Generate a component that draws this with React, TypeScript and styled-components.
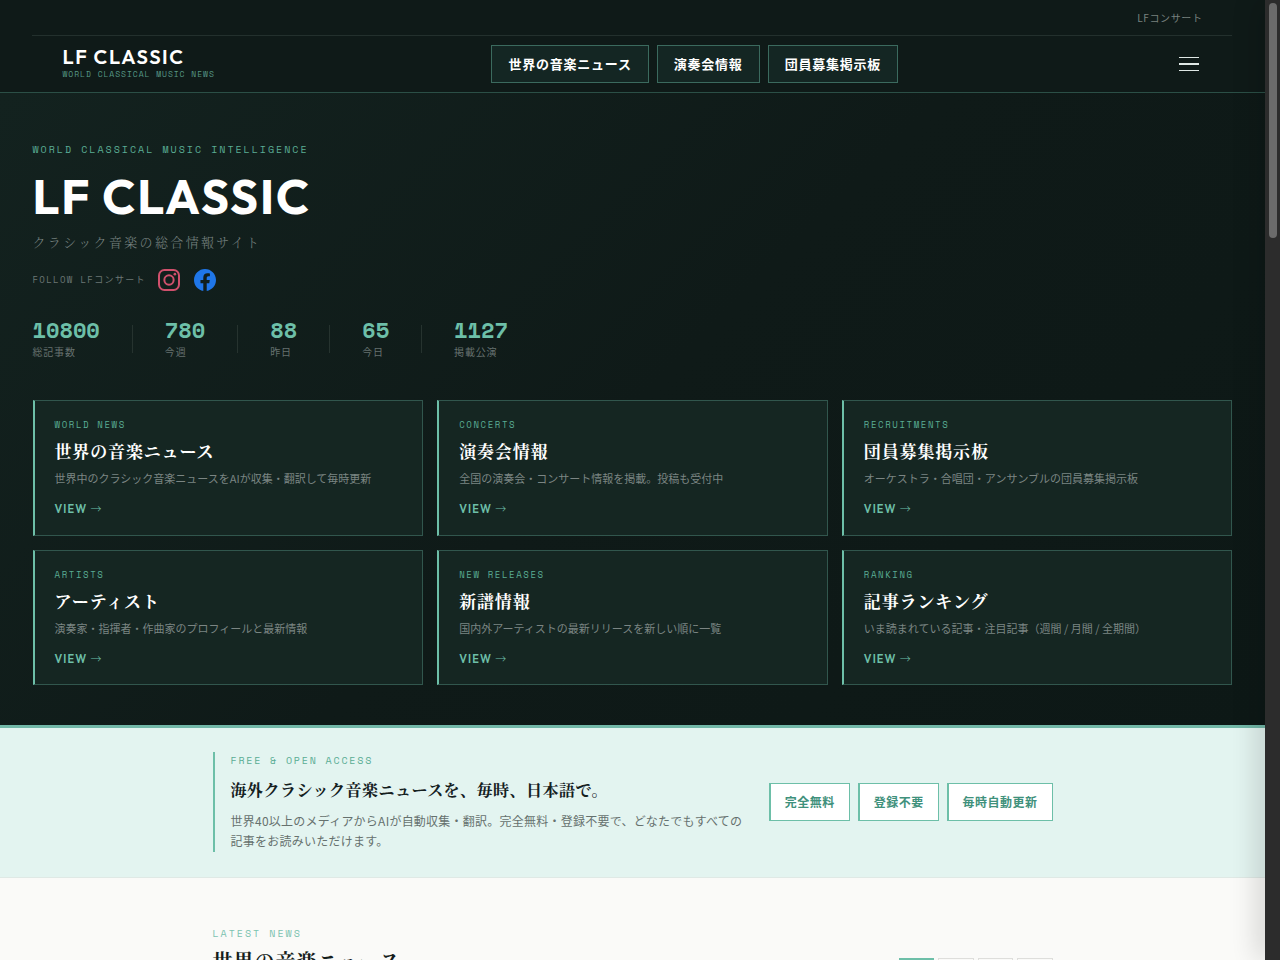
import React from "react";
import styled, { createGlobalStyle } from "styled-components";

const sans = `"Noto Sans CJK JP", "Noto Sans", sans-serif`;
const serif = `"Noto Serif CJK JP", "Noto Serif JP", "Noto Sans CJK JP", serif`;
const mono = `"Space Mono", "Liberation Mono", "Noto Sans CJK JP", monospace`;
const display = `"Outfit", "Lato", "Noto Sans CJK JP", sans-serif`;

const mint = "#6dbfa8";

const GlobalStyle = createGlobalStyle`
  *, *::before, *::after { box-sizing: border-box; }
  html, body { margin: 0; padding: 0; overflow: hidden; }
  body { font-family: ${sans}; background: #fafaf8; }
  h1, h2, h3, p { margin: 0; }
  a { color: inherit; text-decoration: none; }
`;

const Window = styled.div`
  display: flex;
  width: 1280px;
  height: 960px;
  overflow: hidden;
`;

const Page = styled.div`
  flex: 0 0 1265px;
  height: 960px;
  overflow: hidden;
  background: #fafaf8;
`;

const Scrollbar = styled.div`
  position: relative;
  flex: 0 0 15px;
  height: 960px;
  padding: 3px 3px 0 4px;
  background: #2c2c2c;
  box-shadow: -4px 0 28px rgba(0, 0, 0, 0.24);
`;

const Thumb = styled.div`
  height: 235px;
  border-radius: 4px;
  background: #6b6b6b;
`;

const Header = styled.header`
  height: 93px;
  padding-left: 32px;
  background: #0f1a18;
  border-bottom: 1px solid #2b4f46;
`;

const HeaderInner = styled.div`
  width: 1200px;
`;

const Container = styled.div`
  width: 1200px;
  margin: 0 auto;
`;

const TopBar = styled.div`
  display: flex;
  align-items: center;
  justify-content: flex-end;
  height: 36px;
  padding: 0 29.5px 0 0;
  border-bottom: 1px solid #23302d;
  color: #78817f;
  font-size: 10px;
  letter-spacing: 0.6px;
`;

const NavRow = styled.div`
  display: flex;
  align-items: center;
  justify-content: space-between;
  height: 56px;
  padding: 0 29px 0 30.5px;
`;

const Logo = styled.a`
  display: flex;
  flex-direction: column;
  width: 152px;
  padding-bottom: 2px;
  white-space: nowrap;
`;

const LogoName = styled.span`
  color: #fff;
  font: 600 20px/20px ${display};
  letter-spacing: 1.57px;
`;

const LogoTagline = styled.span`
  margin-top: 2px;
  color: #569885;
  font: 400 8px/10px ${mono};
  letter-spacing: 0.96px;
`;

const Nav = styled.nav`
  display: flex;
  gap: 8px;
`;

const NavLink = styled.a`
  display: flex;
  align-items: center;
  height: 38px;
  padding: 0 16px 2px;
  border: 1px solid #3b6a5e;
  background: #142623;
  color: #fff;
  font-size: 13px;
  font-weight: 700;
  letter-spacing: 0.06em;
  white-space: nowrap;
`;

const MenuButton = styled.button`
  display: flex;
  flex-direction: column;
  align-items: center;
  justify-content: space-between;
  width: 28px;
  height: 14px;
  padding: 0;
  border: 0;
  background: none;
`;

const MenuLine = styled.span<{ $thick?: boolean }>`
  width: 20px;
  height: ${(p) => (p.$thick ? 2 : 1)}px;
  background: #dfe8e5;
`;

const Hero = styled.section`
  height: 635px;
  padding-top: 49px;
  border-bottom: 3px solid #72b8a8;
  background: linear-gradient(135deg, #13221f 0%, #0f1a18 50%, #0d1816 100%);
`;

const Eyebrow = styled.div<{ $size: number; $spacing: number; $line: number; $color?: string }>`
  color: ${(p) => p.$color ?? "#5aad94"};
  font: 400 ${(p) => p.$size}px/${(p) => p.$line}px ${mono};
  letter-spacing: ${(p) => p.$spacing}em;
  white-space: nowrap;
`;

const HeroTitle = styled.h1`
  margin-top: 14px;
  color: #fff;
  font: 700 48px/50px ${display};
  letter-spacing: 0.04em;
`;

const HeroSubtitle = styled.p`
  margin-top: 9px;
  color: #788381;
  font: 300 13px/24px ${serif};
  letter-spacing: 0.18em;
`;

const FollowRow = styled.div`
  display: flex;
  align-items: center;
  height: 22px;
  margin-top: 15px;
`;

const FollowLabel = styled.span`
  width: 125px;
  color: #6c7775;
  font: 400 9px/14px ${mono};
  letter-spacing: 0.15em;
  white-space: nowrap;
`;

const SocialIcon = styled.svg`
  display: block;
  width: 22px;
  height: 22px;
  margin-right: 14px;
`;

const Stats = styled.div`
  display: flex;
  align-items: center;
  gap: 32px;
  height: 46px;
  margin-top: 25px;
`;

const Stat = styled.div``;

const StatValue = styled.div`
  color: ${mint};
  font: 700 22px/26px ${mono};
`;

const StatLabel = styled.div`
  color: #66716f;
  font-size: 10px;
  line-height: 18px;
  letter-spacing: 0.8px;
`;

const StatDivider = styled.div`
  width: 1px;
  height: 28px;
  background: #26332f;
`;

const CardGrid = styled.div`
  display: grid;
  grid-template-columns: repeat(3, 1fr);
  grid-auto-rows: 135.5px;
  gap: 14px;
  margin-top: 38px;
`;

const Card = styled.a`
  display: block;
  padding: 17px 20px 0;
  border: 1px solid #31564d;
  border-left: 2px solid ${mint};
  background: #152622;
`;

const CardTitle = styled.h2`
  margin-top: 6px;
  color: #fff;
  font: 700 17px/28px ${serif};
  letter-spacing: 0.05em;
`;

const CardText = styled.p`
  margin-top: 4px;
  color: #7b8583;
  font-size: 11px;
  line-height: 18px;
  white-space: nowrap;
`;

const CardLink = styled.div`
  margin-top: 14px;
  color: ${mint};
  font: 600 11px/16px ${display};
  letter-spacing: 0.1em;
`;

const Arrow = styled.span`
  font-family: ${sans};
  font-weight: 300;
  line-height: 1;
`;

const Intro = styled.section`
  height: 150px;
  padding-top: 24px;
  border-bottom: 1px solid #dfe9e5;
  background: #e3f4f0;
`;

const NarrowRow = styled.div`
  display: flex;
  align-items: center;
  justify-content: space-between;
  width: 840px;
  margin: 0 auto;
`;

const IntroCopy = styled.div`
  height: 100px;
  padding: 1px 0 0 16px;
  border-left: 2px solid ${mint};
`;

const IntroTitle = styled.h2`
  margin-top: 8px;
  color: #14201e;
  font: 700 16px/26px ${serif};
  letter-spacing: 0.03em;
`;

const IntroText = styled.p`
  margin-top: 8px;
  color: #66716e;
  font-size: 12px;
  line-height: 20.4px;
  letter-spacing: 0.02em;
  white-space: nowrap;
`;

const Badges = styled.div`
  display: flex;
  gap: 8px;
`;

const Badge = styled.span`
  display: flex;
  align-items: center;
  height: 38px;
  padding: 0 14px 2px;
  border: 1px solid ${mint};
  border-left-width: 2px;
  background: #fff;
  color: #3f917c;
  font-size: 12px;
  font-weight: 700;
  letter-spacing: 0.04em;
  white-space: nowrap;
`;

const News = styled.section`
  padding-top: 49px;
`;

const NewsHead = styled(NarrowRow)`
  align-items: flex-start;
`;

const NewsTitle = styled.h2`
  margin-top: 4px;
  color: #151e1c;
  font: 700 20px/32px ${serif};
  letter-spacing: 0.05em;
`;

const Tabs = styled.div`
  display: flex;
  gap: 4px;
  margin-top: 31px;
`;

const Tab = styled.button<{ $active?: boolean }>`
  width: 35.5px;
  height: 28px;
  padding: 0;
  border: 1px solid ${(p) => (p.$active ? mint : "#dededb")};
  background: ${(p) => (p.$active ? mint : "transparent")};
`;

const navLinks = ["世界の音楽ニュース", "演奏会情報", "団員募集掲示板"];

const stats = [
  { value: "10800", label: "総記事数" },
  { value: "780", label: "今週" },
  { value: "88", label: "昨日" },
  { value: "65", label: "今日" },
  { value: "1127", label: "掲載公演" },
];

const cards = [
  { tag: "WORLD NEWS", title: "世界の音楽ニュース", text: "世界中のクラシック音楽ニュースをAIが収集・翻訳して毎時更新" },
  { tag: "CONCERTS", title: "演奏会情報", text: "全国の演奏会・コンサート情報を掲載。投稿も受付中" },
  { tag: "RECRUITMENTS", title: "団員募集掲示板", text: "オーケストラ・合唱団・アンサンブルの団員募集掲示板" },
  { tag: "ARTISTS", title: "アーティスト", text: "演奏家・指揮者・作曲家のプロフィールと最新情報" },
  { tag: "NEW RELEASES", title: "新譜情報", text: "国内外アーティストの最新リリースを新しい順に一覧" },
  { tag: "RANKING", title: "記事ランキング", text: "いま読まれている記事・注目記事（週間 / 月間 / 全期間）" },
];

const badges = ["完全無料", "登録不要", "毎時自動更新"];

function InstagramIcon() {
  return (
    <SocialIcon viewBox="0 0 24 24" fill="none" stroke="#d0506c">
      <rect x="1.1" y="1.1" width="21.8" height="21.8" rx="5.9" strokeWidth="2.2" />
      <circle cx="12" cy="12" r="5.08" strokeWidth="2.16" />
      <circle cx="18.4" cy="5.6" r="1.44" fill="#d0506c" stroke="none" />
    </SocialIcon>
  );
}

function FacebookIcon() {
  return (
    <SocialIcon viewBox="0 0 24 24" fill="#1f76e8">
      <path d="M24 12.073c0-6.627-5.373-12-12-12s-12 5.373-12 12c0 5.99 4.388 10.954 10.125 11.854v-8.385H7.078v-3.47h3.047V9.43c0-3.007 1.792-4.669 4.533-4.669 1.312 0 2.686.235 2.686.235v2.953H15.83c-1.491 0-1.956.925-1.956 1.874v2.25h3.328l-.532 3.47h-2.796v8.385C19.612 23.027 24 18.062 24 12.073z" />
    </SocialIcon>
  );
}

export default function App() {
  return (
    <Window>
      <GlobalStyle />
      <Page>
        <Header>
          <HeaderInner>
            <TopBar>LFコンサート</TopBar>
            <NavRow>
              <Logo href="#">
                <LogoName>LF CLASSIC</LogoName>
                <LogoTagline>WORLD CLASSICAL MUSIC NEWS</LogoTagline>
              </Logo>
              <Nav>
                {navLinks.map((label) => (
                  <NavLink key={label} href="#">{label}</NavLink>
                ))}
              </Nav>
              <MenuButton aria-label="メニュー">
                <MenuLine />
                <MenuLine $thick />
                <MenuLine />
              </MenuButton>
            </NavRow>
          </HeaderInner>
        </Header>

        <Hero>
          <Container>
            <Eyebrow $size={10} $spacing={0.2} $line={15}>WORLD CLASSICAL MUSIC INTELLIGENCE</Eyebrow>
            <HeroTitle>LF CLASSIC</HeroTitle>
            <HeroSubtitle>クラシック音楽の総合情報サイト</HeroSubtitle>
            <FollowRow>
              <FollowLabel>FOLLOW LFコンサート</FollowLabel>
              <InstagramIcon />
              <FacebookIcon />
            </FollowRow>
            <Stats>
              {stats.map((s, i) => (
                <React.Fragment key={s.label}>
                  {i > 0 && <StatDivider />}
                  <Stat>
                    <StatValue>{s.value}</StatValue>
                    <StatLabel>{s.label}</StatLabel>
                  </Stat>
                </React.Fragment>
              ))}
            </Stats>
            <CardGrid>
              {cards.map((c) => (
                <Card key={c.tag} href="#">
                  <Eyebrow $size={9} $spacing={0.18} $line={13}>{c.tag}</Eyebrow>
                  <CardTitle>{c.title}</CardTitle>
                  <CardText>{c.text}</CardText>
                  <CardLink>VIEW <Arrow>→</Arrow></CardLink>
                </Card>
              ))}
            </CardGrid>
          </Container>
        </Hero>

        <Intro>
          <NarrowRow>
            <IntroCopy>
              <Eyebrow $size={10} $spacing={0.18} $line={16}>FREE &amp; OPEN ACCESS</Eyebrow>
              <IntroTitle>海外クラシック音楽ニュースを、毎時、日本語で。</IntroTitle>
              <IntroText>
                世界40以上のメディアからAIが自動収集・翻訳。完全無料・登録不要で、どなたでもすべての
                <br />
                記事をお読みいただけます。
              </IntroText>
            </IntroCopy>
            <Badges>
              {badges.map((b) => (
                <Badge key={b}>{b}</Badge>
              ))}
            </Badges>
          </NarrowRow>
        </Intro>

        <News>
          <NewsHead>
            <div>
              <Eyebrow $size={10} $spacing={0.2} $line={14} $color="#7cc3b0">LATEST NEWS</Eyebrow>
              <NewsTitle>世界の音楽ニュース</NewsTitle>
            </div>
            <Tabs>
              <Tab $active />
              <Tab />
              <Tab />
              <Tab />
            </Tabs>
          </NewsHead>
        </News>
      </Page>
      <Scrollbar>
        <Thumb />
      </Scrollbar>
    </Window>
  );
}
